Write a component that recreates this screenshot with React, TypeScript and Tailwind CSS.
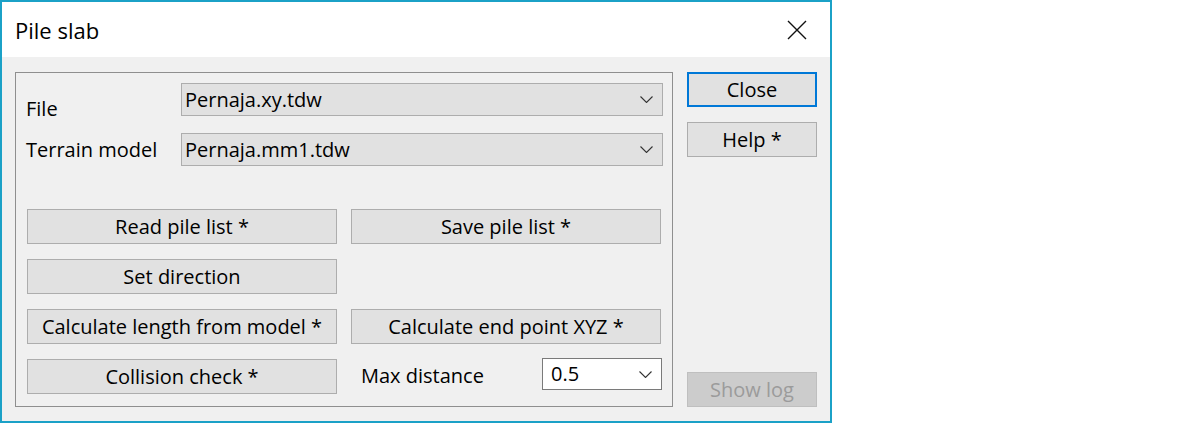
import React from 'react';

const font = { fontFamily: '"Open Sans", "Noto Sans", sans-serif' };

const Chevron: React.FC = () => (
  <svg width="13" height="7" viewBox="0 0 13 7" className="shrink-0">
    <path d="M0.5 0.5 L6.5 6.5 L12.5 0.5" fill="none" stroke="#333333" strokeWidth="1.1" />
  </svg>
);

const Combo: React.FC<{ value: string; white?: boolean; className?: string }> = ({ value, white, className }) => (
  <div
    className={`flex items-center justify-between border pr-[9px] ${
      white ? 'bg-white border-[#7a7a7a] pl-[8px]' : 'bg-[#e1e1e1] border-[#adadad] pl-[3px]'
    } ${className ?? ''}`}
  >
    <span className="leading-none text-[20px] text-black">{value}</span>
    <Chevron />
  </div>
);

const Btn: React.FC<{ label: string; className?: string }> = ({ label, className }) => (
  <button
    className={`flex items-center justify-center h-[35px] bg-[#e1e1e1] border border-[#adadad] text-[20px] leading-none text-black ${className ?? ''}`}
  >
    {label}
  </button>
);

const App: React.FC = () => {
  return (
    <div className="w-[1200px] h-[423px] bg-white" style={font}>
      <div className="w-[832px] h-[423px] border-2 border-[#1ba1c7] flex flex-col">
        {/* Title bar */}
        <div className="h-[55px] bg-white flex items-center justify-between pl-[13px] pr-[23px] pt-[1px]">
          <span className="text-[22px] leading-none text-black">Pile slab</span>
          <svg width="20" height="20" viewBox="0 0 20 20">
            <path d="M1 1 L19 19 M19 1 L1 19" stroke="#111111" strokeWidth="1.4" fill="none" />
          </svg>
        </div>

        {/* Body */}
        <div className="flex-1 bg-[#f0f0f0] flex pl-[13px] pr-[13px] pt-[15px] pb-[14px] gap-[14px]">
          {/* Group box */}
          <div className="w-[658px] border border-[#8f8f8f] pl-[11px] pr-[9px] pt-[10px] flex flex-col">
            <div className="flex h-[33px]">
              <span className="w-[155px] -ml-[1px] mt-[16px] text-[20px] leading-none">File</span>
              <Combo value="Pernaja.xy.tdw" className="flex-1 h-[33px]" />
            </div>
            <div className="flex h-[33px] mt-[17px]">
              <span className="w-[155px] -ml-[1px] mt-[7px] text-[20px] leading-none">Terrain model</span>
              <Combo value="Pernaja.mm1.tdw" className="flex-1 h-[33px]" />
            </div>

            <div className="grid grid-cols-[310px_310px] gap-x-[14px] gap-y-[15px] mt-[43px]">
              <Btn label="Read pile list *" />
              <Btn label="Save pile list *" />
              <Btn label="Set direction" />
              <div />
              <Btn label="Calculate length from model *" />
              <Btn label="Calculate end point XYZ *" />
              <Btn label="Collision check *" />
              <div className="flex items-start justify-between h-[35px] -mr-[1px]">
                <span className="ml-[10px] mt-[7px] text-[20px] leading-none">Max distance</span>
                <Combo value="0.5" white className="w-[120px] h-[32px] -mt-[1px]" />
              </div>
            </div>
          </div>

          {/* Right buttons */}
          <div className="w-[130px] flex flex-col">
            <button className="h-[35px] bg-[#e1e1e1] border-2 border-[#0078d7] text-[20px] leading-none text-black">
              Close
            </button>
            <Btn label="Help *" className="mt-[15px]" />
            <button className="mt-auto h-[35px] bg-[#cccccc] border border-[#bfbfbf] text-[20px] leading-none text-[#9b9b9b]">
              Show log
            </button>
          </div>
        </div>
      </div>
    </div>
  );
};

export default App;
